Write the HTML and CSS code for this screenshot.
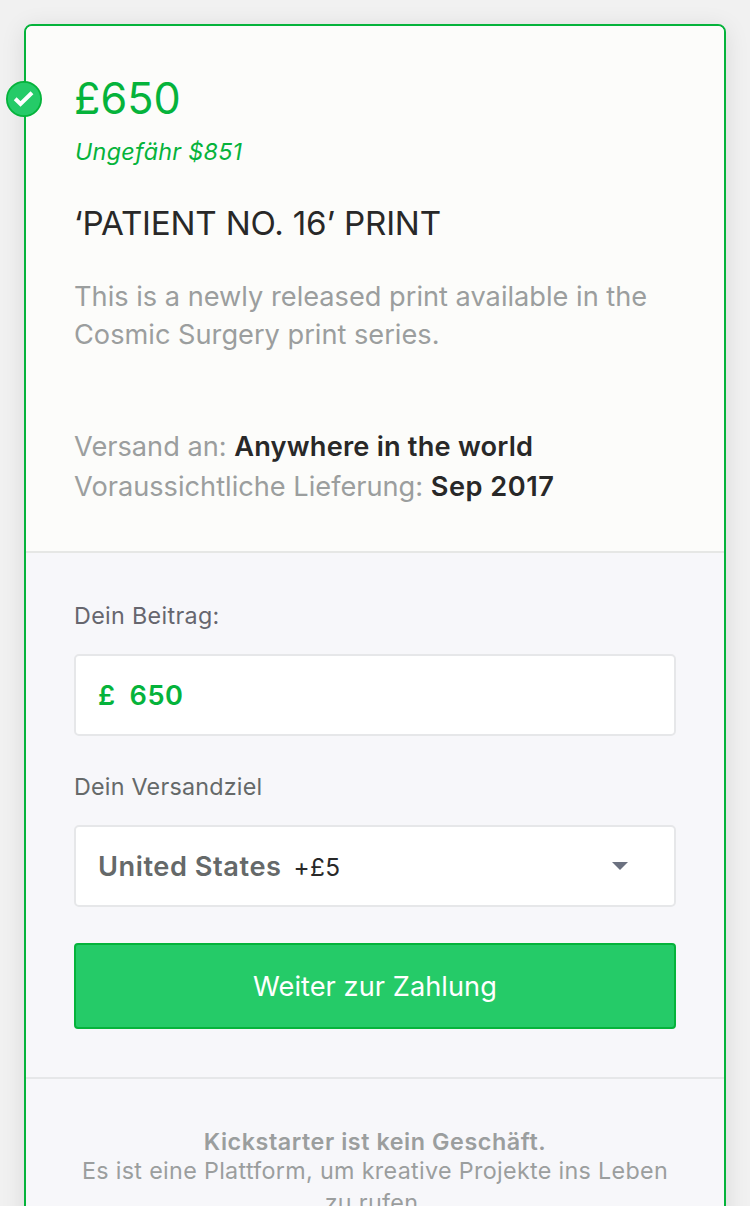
FILE: index.html
```html
<!DOCTYPE html>
<html lang="de">
<head>
<meta charset="utf-8">
<title>Belohnung</title>
<link rel="stylesheet" href="styles.css">
</head>
<body>
<main class="reward">
  <span class="badge">
    <svg width="36" height="36" viewBox="0 0 36 36" aria-hidden="true"><circle cx="18" cy="18" r="17.1"/><path d="M9.2 17.8L14.5 23L26 11.7"/></svg>
  </span>
  <section class="summary">
    <div class="price">£650</div>
    <div class="approx">Ungefähr $851</div>
    <h1 class="title">‘PATIENT NO. 16’ PRINT</h1>
    <p class="desc">This is a newly released print available in the<br>Cosmic Surgery print series.</p>
    <div class="facts">
      <div>Versand an: <b>Anywhere in the world</b></div>
      <div>Voraussichtliche Lieferung: <b class="date">Sep 2017</b></div>
    </div>
  </section>
  <section class="form">
    <div class="label label-amount">Dein Beitrag:</div>
    <div class="field amount"><span class="currency">£</span><span class="value">650</span></div>
    <div class="label label-dest">Dein Versandziel</div>
    <div class="field select"><span class="country">United States</span><span class="fee">+£5</span>
      <svg class="caret" width="16" height="8" viewBox="0 0 16 8" aria-hidden="true"><path d="M0 0H16L8 8Z"/></svg>
    </div>
    <button class="submit" type="button">Weiter zur Zahlung</button>
  </section>
  <footer class="note">
    <strong class="note-title">Kickstarter ist kein Geschäft.</strong>
    <p class="note-text">Es ist eine Plattform, um kreative Projekte ins Leben<br>zu rufen.</p>
  </footer>
</main>
</body>
</html>
```
FILE: styles.css
```css
* { box-sizing: border-box; }
html { height: 100%; overflow: hidden; }
body {
  margin: 0;
  height: 1206px;
  overflow: hidden;
  padding: 24px 24px 0;
  background: #f1f1f1;
  font-family: Inter, "Liberation Sans", sans-serif;
  color: #282828;
}
.reward {
  position: relative;
  height: 1240px;
  border: 2px solid #05b33b;
  border-radius: 8px;
  background: #f7f7fa;
  box-shadow: 0 4px 24px rgba(0, 0, 0, 0.1);
}
.badge { position: absolute; left: -20px; top: 55px; width: 36px; height: 36px; }
.badge svg { display: block; }
.badge circle { fill: #25cb68; stroke: #05b33b; stroke-width: 1.8; }
.badge path { fill: none; stroke: #fff; stroke-width: 4; }
.summary {
  height: 527px;
  padding: 46px 48px 0;
  background: #fcfcfa;
  border-bottom: 2px solid #e6e7e5;
  border-radius: 6px 6px 0 0;
  white-space: nowrap;
}
.price { height: 52px; line-height: 52px; font-size: 43.2px; color: #05b33b; }
.approx { margin: 13px 0 0 1px; height: 30px; line-height: 30px; font-size: 23.3px; font-style: italic; color: #05b33b; letter-spacing: 0.3px; }
.title { margin: 36px 0 0; height: 40px; line-height: 40px; font-size: 33.2px; font-weight: 400; letter-spacing: -0.2px; }
.desc { margin: 35px 0 0; line-height: 38px; font-size: 27.2px; color: #9b9e9e; }
.facts { margin-top: 73px; line-height: 40px; font-size: 27.2px; color: #9b9e9e; }
.facts b { font-weight: 600; color: #282828; letter-spacing: 0.2px; }
.facts .date { letter-spacing: 0.5px; }
.form {
  height: 526px;
  padding: 48px 48px 0;
  border-bottom: 2px solid #e6e7e9;
}
.label { height: 30px; line-height: 30px; font-size: 23.3px; color: #66666e; letter-spacing: 0.33px; }
.field {
  display: flex;
  align-items: center;
  height: 82px;
  margin-top: 23px;
  padding: 1px 22px 0;
  border: 2px solid #e6e7e9;
  border-radius: 5px;
  background: #fff;
  font-size: 27.2px;
  font-weight: 600;
  letter-spacing: 0.45px;
}
.amount { color: #05b33b; }
.currency { margin-right: 14px; }
.label-dest { margin-top: 36px; color: #656969; letter-spacing: 0.23px; }
.country { color: #656969; letter-spacing: 0.55px; }
.fee { margin-left: 12px; font-size: 24.4px; font-weight: 400; letter-spacing: 0.3px; }
.caret { margin: 0 24px 1px auto; fill: #6b7180; }
.submit {
  display: block;
  width: 100%;
  height: 86px;
  margin-top: 36px;
  padding: 1px 0 0;
  border: 2px solid #05b33b;
  border-radius: 4px;
  background: #25cb68;
  color: #fff;
  font: 400 27.2px Inter, "Liberation Sans", sans-serif;
  letter-spacing: 0.05px;
}
.note { padding-top: 49px; text-align: center; font-size: 23.3px; color: #9b9e9e; white-space: nowrap; }
.note-title { display: block; line-height: 28px; font-weight: 600; letter-spacing: 0.57px; }
.note-text { margin: -1px 0 0; line-height: 31.5px; letter-spacing: 0.33px; }
```
